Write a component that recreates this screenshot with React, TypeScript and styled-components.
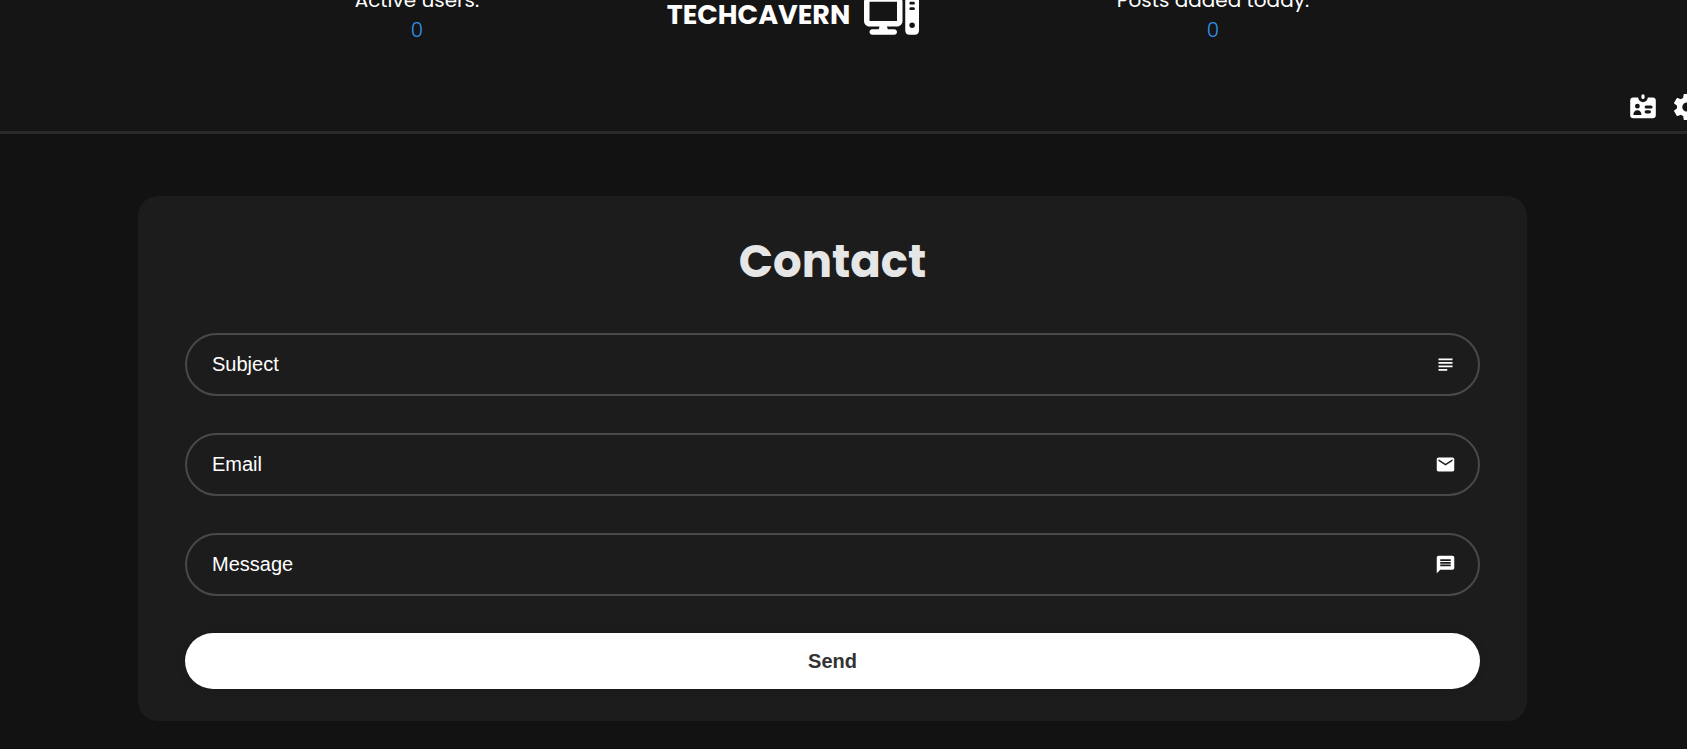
import React from 'react';
import styled, { createGlobalStyle } from 'styled-components';
import { FaComputer } from 'react-icons/fa6';
import { HiIdentification } from 'react-icons/hi';
import { MdEmail, MdMessage, MdSubject } from 'react-icons/md';
import { IoMdSettings } from 'react-icons/io';

const GlobalStyle = createGlobalStyle`
  *, *::before, *::after { box-sizing: border-box; }
  body {
    margin: 0;
    background: #121212;
    color: #fff;
    font-family: Poppins, Inter, sans-serif;
    overflow-x: hidden;
  }
`;

const Header = styled.header`
  background: #151515;
  border-bottom: 3px solid #292929;
  overflow: hidden;
`;

const TopBar = styled.div`
  display: grid;
  grid-template-columns: 1fr 1fr 1fr;
  align-items: center;
  margin-top: -15px;
  padding: 0 275px 0 218px;
`;

const Stat = styled.div`
  font-size: 20px;
  line-height: 30px;
  text-align: center;
`;

const StatValue = styled.div`
  color: #3291ea;
  font-weight: 300;
`;

const Logo = styled.a`
  display: flex;
  align-items: center;
  justify-content: center;
  gap: 14px;
  height: 60px;
  padding-right: 44px;
  color: #fff;
  font-size: 27px;
  font-weight: 700;
  line-height: 60px;
  text-decoration: none;
`;

const Nav = styled.nav`
  display: flex;
  justify-content: flex-end;
  gap: 12px;
  margin-right: -16px;
  padding: 46px 0 8px;
`;

const NavButton = styled.button`
  display: flex;
  padding: 0;
  border: 0;
  background: none;
  color: #fff;
  font-size: 32px;
  cursor: pointer;
`;

const Main = styled.main`
  padding: 62px 160px 28px 138px;
`;

const Card = styled.form`
  display: flex;
  flex-direction: column;
  padding: 30px 47px 32px;
  border-radius: 20px;
  background: #1c1c1c;
`;

const Title = styled.h1`
  margin: 0 0 35px;
  color: #e6e6e6;
  font-size: 45px;
  font-weight: 700;
  line-height: 72px;
  text-align: center;
`;

const Field = styled.label`
  display: flex;
  align-items: center;
  height: 63px;
  margin-bottom: 37px;
  padding: 0 22px 0 25px;
  border: 2px solid #494949;
  border-radius: 40px;
  font-size: 21px;
`;

const Input = styled.input`
  flex: 1;
  min-width: 0;
  padding: 0;
  border: 0;
  outline: 0;
  background: none;
  color: #fff;
  font: 20px 'Liberation Sans', Arial, sans-serif;

  &::placeholder {
    color: #fff;
    opacity: 1;
  }
`;

const SendButton = styled.button`
  height: 56px;
  border: 0;
  border-radius: 40px;
  background: #fff;
  box-shadow: 0 0 10px rgba(0, 0, 0, 0.1);
  color: #333;
  font: 700 20px 'Liberation Sans', Arial, sans-serif;
  cursor: pointer;
`;

const fields = [
  { name: 'Subject', type: 'text', Icon: MdSubject },
  { name: 'Email', type: 'email', Icon: MdEmail },
  { name: 'Message', type: 'text', Icon: MdMessage },
];

export default function App() {
  return (
    <>
      <GlobalStyle />
      <Header>
        <TopBar>
          <Stat>
            Active users:
            <StatValue>0</StatValue>
          </Stat>
          <Logo href="#">
            TECHCAVERN
            <FaComputer size={55} />
          </Logo>
          <Stat>
            Posts added today:
            <StatValue>0</StatValue>
          </Stat>
        </TopBar>
        <Nav>
          <NavButton type="button" aria-label="Account">
            <HiIdentification />
          </NavButton>
          <NavButton type="button" aria-label="Settings">
            <IoMdSettings />
          </NavButton>
        </Nav>
      </Header>
      <Main>
        <Card onSubmit={(e: React.FormEvent) => e.preventDefault()}>
          <Title>Contact</Title>
          {fields.map(({ name, type, Icon }) => (
            <Field key={name}>
              <Input type={type} placeholder={name} aria-label={name} />
              <Icon />
            </Field>
          ))}
          <SendButton type="submit">Send</SendButton>
        </Card>
      </Main>
    </>
  );
}
